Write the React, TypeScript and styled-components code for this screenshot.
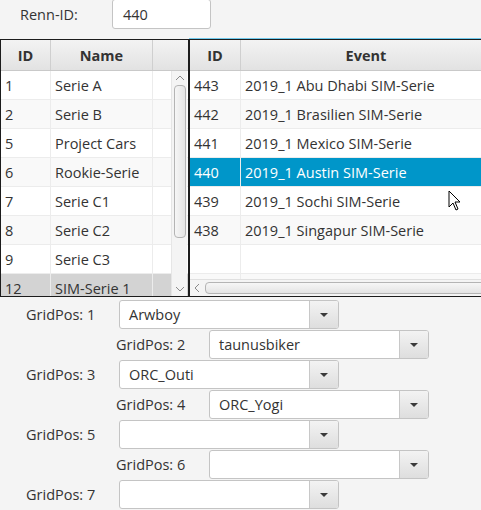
import React from 'react';
import styled, { createGlobalStyle } from 'styled-components';

const GlobalStyle = createGlobalStyle`
  html, body {
    margin: 0;
    padding: 0;
    background: #f4f4f4;
    overflow: hidden;
  }
  body {
    font-family: 'Open Sans', 'Noto Sans', sans-serif;
    font-size: 14.5px;
    color: #333333;
  }
`;

const Page = styled.div`
  position: relative;
  width: 481px;
  height: 510px;
  overflow: hidden;
`;

const TopBar = styled.div`
  display: flex;
  align-items: center;
  height: 30px;
  margin-top: -1px;
  margin-bottom: 10px;
  padding-left: 20px;
`;

const Label = styled.span`
  color: #333;
  white-space: nowrap;
`;

const TextField = styled.div`
  box-sizing: border-box;
  width: 99px;
  height: 30px;
  margin-left: 34px;
  padding: 0 10px;
  display: flex;
  align-items: center;
  background: #fff;
  border: 1px solid #c4c4c4;
  border-radius: 3px;
`;

const Tables = styled.div`
  display: flex;
  height: 258px;
`;

const Table = styled.div<{ $width: number; $focused?: boolean }>`
  position: relative;
  box-sizing: border-box;
  flex: 0 0 ${(p) => p.$width}px;
  width: ${(p) => p.$width}px;
  border: 1px solid #1c1c1c;
  background: #fff;
  overflow: hidden;
  box-shadow: ${(p) => (p.$focused ? '0 -1px 0 0 #6fc9ec' : 'none')};
`;

const HeaderRow = styled.div`
  display: flex;
  height: 30px;
  background: linear-gradient(#f3f3f3, #e2e2e2);
  border-bottom: 1px solid #c9c9c9;
`;

const HeaderCell = styled.div<{ $w: number; $last?: boolean }>`
  box-sizing: border-box;
  flex: 0 0 ${(p) => p.$w}px;
  display: flex;
  align-items: center;
  justify-content: center;
  font-weight: 700;
  color: #333;
  border-right: ${(p) => (p.$last ? 'none' : '1px solid #cfcfcf')};
`;

const Row = styled.div<{ $alt?: boolean; $state?: 'selected' | 'inactive' }>`
  display: flex;
  height: 29px;
  box-sizing: border-box;
  border-bottom: 1px solid #ececec;
  background: ${(p) =>
    p.$state === 'selected'
      ? '#0096c9'
      : p.$state === 'inactive'
      ? '#d3d3d3'
      : p.$alt
      ? '#f9f9f9'
      : '#ffffff'};
  color: ${(p) => (p.$state === 'selected' ? '#ffffff' : '#333333')};
`;

const Cell = styled.div<{ $w: number; $last?: boolean }>`
  box-sizing: border-box;
  flex: 0 0 ${(p) => p.$w}px;
  display: flex;
  align-items: center;
  padding-left: 4px;
  white-space: nowrap;
  overflow: hidden;
  border-right: ${(p) => (p.$last ? 'none' : '1px solid #ececec')};
`;

const VScroll = styled.div`
  position: absolute;
  right: 1px;
  top: 31px;
  bottom: 0;
  width: 15px;
  background: #f4f4f4;
  border-left: 1px solid #e6e6e6;
  display: flex;
  flex-direction: column;
  align-items: center;
`;

const ScrollArrow = styled.div`
  flex: 0 0 14px;
  display: flex;
  align-items: center;
  justify-content: center;
`;

const Spacer = styled.div`
  flex: 1;
`;

const VThumb = styled.div`
  box-sizing: border-box;
  width: 12px;
  height: 153px;
  border: 1px solid #b4b4b4;
  border-radius: 4px;
  background: linear-gradient(to right, #f6f6f6, #e4e4e4);
`;

const HScroll = styled.div`
  position: absolute;
  left: 0;
  right: 0;
  bottom: 0;
  height: 16px;
  background: #f4f4f4;
  border-top: 1px solid #e0e0e0;
  display: flex;
  align-items: center;
`;

const HThumb = styled.div`
  box-sizing: border-box;
  flex: 1;
  height: 12px;
  margin-left: 1px;
  border: 1px solid #b4b4b4;
  border-radius: 4px;
  background: linear-gradient(#f6f6f6, #e4e4e4);
`;

const Grid = styled.div`
  display: flex;
  flex-direction: column;
  gap: 1px;
  padding-top: 3px;
`;

const GridRow = styled.div<{ $even?: boolean }>`
  display: flex;
  align-items: center;
  height: 29px;
  padding-left: ${(p) => (p.$even ? 116 : 26)}px;
`;

const GridLabel = styled.span`
  flex: 0 0 93px;
  color: #333;
  white-space: nowrap;
`;

const Combo = styled.div`
  box-sizing: border-box;
  display: flex;
  width: 220px;
  height: 29px;
  background: #fff;
  border: 1px solid #c4c4c4;
  border-radius: 3px;
  overflow: hidden;
`;

const ComboValue = styled.div`
  flex: 1;
  display: flex;
  align-items: center;
  padding-left: 9px;
  white-space: nowrap;
`;

const ComboButton = styled.div`
  flex: 0 0 28px;
  display: flex;
  align-items: center;
  justify-content: center;
  border-left: 1px solid #c8c8c8;
  background: linear-gradient(#f3f3f3, #dedede);
`;

const Caret = styled.div`
  width: 0;
  height: 0;
  border-left: 4.5px solid transparent;
  border-right: 4.5px solid transparent;
  border-top: 4.5px solid #3a3a3a;
`;

const Pointer = styled.svg`
  position: absolute;
  left: 448px;
  top: 190px;
`;

const Chevron = ({ dir }: { dir: 'up' | 'down' | 'left' }) => {
  const d =
    dir === 'up' ? 'M1 5 L5 1 L9 5' : dir === 'down' ? 'M1 1 L5 5 L9 1' : 'M5 1 L1 5 L5 9';
  const w = dir === 'left' ? 7 : 10;
  const h = dir === 'left' ? 10 : 7;
  return (
    <svg width={w} height={h} viewBox={`0 0 ${w} ${h}`}>
      <path d={d} fill="none" stroke="#8a8a8a" strokeWidth="1" />
    </svg>
  );
};

const series = [
  ['1', 'Serie A'],
  ['2', 'Serie B'],
  ['5', 'Project Cars'],
  ['6', 'Rookie-Serie'],
  ['7', 'Serie C1'],
  ['8', 'Serie C2'],
  ['9', 'Serie C3'],
  ['12', 'SIM-Serie 1'],
];

const events = [
  ['443', '2019_1 Abu Dhabi SIM-Serie'],
  ['442', '2019_1 Brasilien SIM-Serie'],
  ['441', '2019_1 Mexico SIM-Serie'],
  ['440', '2019_1 Austin SIM-Serie'],
  ['439', '2019_1 Sochi SIM-Serie'],
  ['438', '2019_1 Singapur SIM-Serie'],
  ['', ''],
  ['', ''],
];

const drivers = ['Arwboy', 'taunusbiker', 'ORC_Outi', 'ORC_Yogi', '', '', ''];

export default function App() {
  return (
    <Page>
      <GlobalStyle />
      <TopBar>
        <Label>Renn-ID:</Label>
        <TextField>440</TextField>
      </TopBar>

      <Tables>
        <Table $width={189}>
          <HeaderRow>
            <HeaderCell $w={50}>ID</HeaderCell>
            <HeaderCell $w={102}>Name</HeaderCell>
            <HeaderCell $w={35} $last />
          </HeaderRow>
          {series.map(([id, name], i) => (
            <Row key={id} $alt={i % 2 === 1} $state={id === '12' ? 'inactive' : undefined}>
              <Cell $w={50}>{id}</Cell>
              <Cell $w={102}>{name}</Cell>
              <Cell $w={35} $last />
            </Row>
          ))}
          <VScroll>
            <ScrollArrow>
              <Chevron dir="up" />
            </ScrollArrow>
            <VThumb />
            <Spacer />
            <ScrollArrow>
              <Chevron dir="down" />
            </ScrollArrow>
          </VScroll>
        </Table>

        <Table $width={310} $focused>
          <HeaderRow>
            <HeaderCell $w={51}>ID</HeaderCell>
            <HeaderCell $w={250} $last>
              Event
            </HeaderCell>
          </HeaderRow>
          {events.map(([id, name], i) => (
            <Row
              key={i}
              $alt={i % 2 === 1}
              $state={id === '440' ? 'selected' : undefined}
            >
              <Cell $w={51}>{id}</Cell>
              <Cell $w={250} $last>
                {name}
              </Cell>
            </Row>
          ))}
          <HScroll>
            <ScrollArrow>
              <Chevron dir="left" />
            </ScrollArrow>
            <HThumb />
          </HScroll>
        </Table>
      </Tables>

      <Grid>
        {drivers.map((name, i) => (
          <GridRow key={i} $even={i % 2 === 1}>
            <GridLabel>GridPos: {i + 1}</GridLabel>
            <Combo>
              <ComboValue>{name}</ComboValue>
              <ComboButton>
                <Caret />
              </ComboButton>
            </Combo>
          </GridRow>
        ))}
      </Grid>

      <Pointer width="14" height="22" viewBox="0 0 14 22">
        <path
          d="M1 1 L1 17 L5 13 L8 20 L10 19 L7 12 L12 12 Z"
          fill="#ffffff"
          stroke="#000000"
          strokeWidth="1"
        />
      </Pointer>
    </Page>
  );
}
